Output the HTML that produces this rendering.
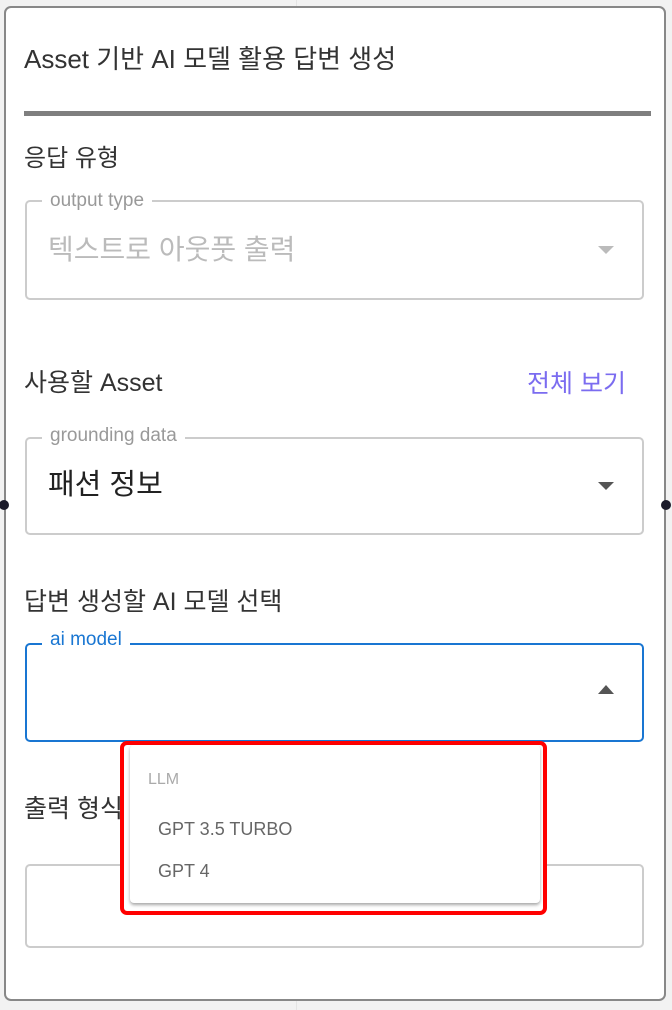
<!DOCTYPE html>
<html><head><meta charset="utf-8"><style>
*{margin:0;padding:0;box-sizing:border-box}
body{width:672px;height:1010px;background:#f2f2f2;position:relative;overflow:hidden;font-family:"Liberation Sans","Noto Sans CJK KR",sans-serif;color:#333}
.card{position:absolute;left:4px;top:6px;width:662px;height:995px;background:#fff;border:2px solid #888;border-radius:7px}
.t{position:absolute;white-space:nowrap;line-height:1}
.f{position:absolute;left:25px;width:619px;border:2px solid #ccc;border-radius:5px}
.lbl{position:absolute;background:#fff;padding:0 8px;font-size:19px;line-height:1;color:#999;white-space:nowrap}
.arr{position:absolute;width:0;height:0;border-left:8px solid transparent;border-right:8px solid transparent}
.dot{position:absolute;width:10px;height:10px;border-radius:50%;background:#1a1a2a;top:500px}
</style></head><body>
<div style="position:absolute;left:296px;top:0;width:1px;height:1010px;background:#e4e4e4"></div>
<div class="card"></div>
<div class="t" style="left:24px;top:46px;font-size:26px;color:#333">Asset 기반 AI 모델 활용 답변 생성</div>
<div style="position:absolute;left:24px;top:111px;width:627px;height:5px;background:#7f7f7f"></div>
<div class="t" style="left:24px;top:147px;font-size:24px;color:#333">응답 유형</div>
<div class="f" style="top:200px;height:100px"></div>
<div class="lbl" style="left:42px;top:191px">output type</div>
<div class="t" style="left:48px;top:236px;font-size:28px;color:#bbb">텍스트로 아웃풋 출력</div>
<div class="arr" style="left:598px;top:246px;border-top:8px solid #bbb"></div>

<div class="t" style="left:24px;top:371px;font-size:25px;color:#333">사용할 Asset</div>
<div class="t" style="left:527px;top:372px;font-size:25px;color:#7b6cf0">전체 보기</div>
<div class="f" style="top:437px;height:98px"></div>
<div class="lbl" style="left:42px;top:426px">grounding data</div>
<div class="t" style="left:48px;top:471px;font-size:29px;color:#222">패션 정보</div>
<div class="arr" style="left:598px;top:482px;border-top:8px solid #555"></div>
<div class="dot" style="left:-1px"></div><div class="dot" style="left:661px"></div>

<div class="t" style="left:24px;top:590px;font-size:25px;color:#333">답변 생성할 AI 모델 선택</div>
<div class="f" style="top:643px;height:99px;border-color:#1976d2"></div>
<div class="lbl" style="left:42px;top:630px;color:#1976d2">ai model</div>
<div class="arr" style="left:598px;top:685px;border-bottom:9px solid #555"></div>

<div class="t" style="left:24px;top:797px;font-size:25px;color:#333">출력 형식</div>
<div class="f" style="top:864px;height:84px"></div>

<div style="position:absolute;left:120px;top:741px;width:427px;height:174px;border:4px solid #f00;border-radius:7px;background:#fff"></div>
<div style="position:absolute;left:130px;top:745px;width:410px;height:158px;background:#fff;border-radius:4px;box-shadow:0 2px 3px rgba(0,0,0,.35)"></div>
<div class="t" style="left:148px;top:772px;font-size:16px;color:#aaa">LLM</div>
<div class="t" style="left:158px;top:820px;font-size:18px;color:#666">GPT 3.5 TURBO</div>
<div class="t" style="left:158px;top:862px;font-size:18px;color:#666">GPT 4</div>
</body></html>
